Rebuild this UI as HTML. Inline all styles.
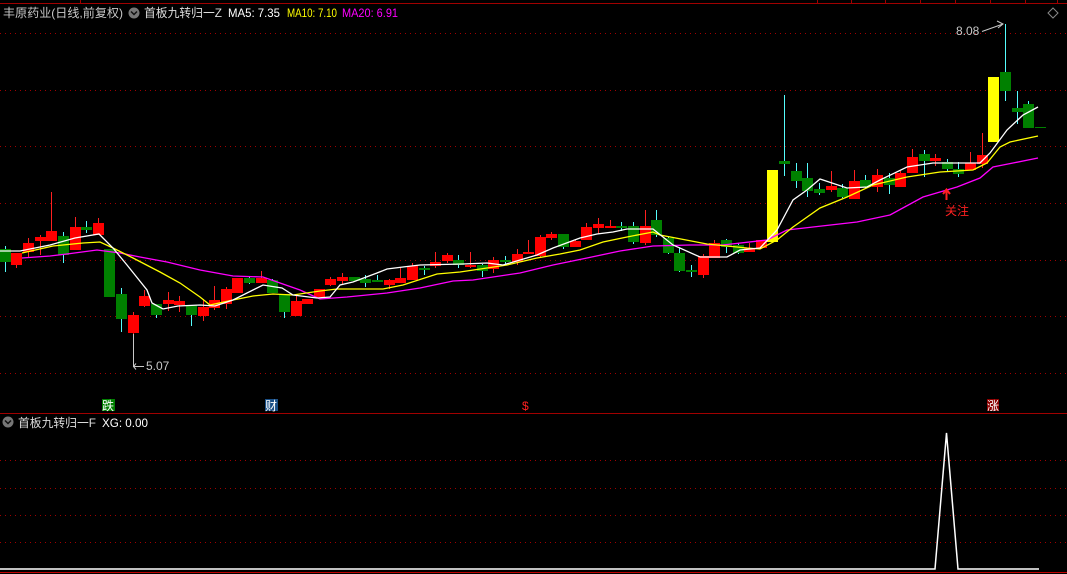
<!DOCTYPE html>
<html><head><meta charset="utf-8"><style>
html,body{margin:0;padding:0;background:#000;width:1067px;height:574px;overflow:hidden}
svg{display:block}
text{font-family:"Liberation Sans","Noto Sans CJK SC",sans-serif;font-size:12px}
</style></head><body>
<svg width="1067" height="574" viewBox="0 0 1067 574" xmlns="http://www.w3.org/2000/svg">
<rect width="1067" height="574" fill="#000"/>
<line x1="0" y1="3.5" x2="1067" y2="3.5" stroke="#a00000"/>
<g stroke="#a00000"><line x1="80.5" y1="0" x2="80.5" y2="3"/><line x1="817.5" y1="0" x2="817.5" y2="3"/><line x1="851.5" y1="0" x2="851.5" y2="3"/><line x1="885.5" y1="0" x2="885.5" y2="3"/><line x1="920.5" y1="0" x2="920.5" y2="3"/><line x1="955.5" y1="0" x2="955.5" y2="3"/><line x1="990.5" y1="0" x2="990.5" y2="3"/><line x1="1025.5" y1="0" x2="1025.5" y2="3"/><line x1="1057.5" y1="0" x2="1057.5" y2="3"/></g>
<g stroke="#a00000" stroke-dasharray="1,4">
<line x1="0" y1="33.5" x2="1067" y2="33.5"/><line x1="0" y1="90.5" x2="1067" y2="90.5"/><line x1="0" y1="146.5" x2="1067" y2="146.5"/><line x1="0" y1="203.5" x2="1067" y2="203.5"/><line x1="0" y1="260.5" x2="1067" y2="260.5"/><line x1="0" y1="316.5" x2="1067" y2="316.5"/><line x1="0" y1="373.5" x2="1067" y2="373.5"/>
<line x1="0" y1="460.5" x2="1067" y2="460.5"/><line x1="0" y1="488.5" x2="1067" y2="488.5"/><line x1="0" y1="515.5" x2="1067" y2="515.5"/><line x1="0" y1="542.5" x2="1067" y2="542.5"/>
</g>
<text x="3" y="17" fill="#c8c8c8" textLength="120" lengthAdjust="spacingAndGlyphs">丰原药业(日线,前复权)</text>
<circle cx="134" cy="13" r="5.5" fill="#777"/><path d="M131 11.5 L134 14.5 L137 11.5" stroke="#111" stroke-width="1.5" fill="none"/>
<text x="144" y="17" fill="#ddd" textLength="78" lengthAdjust="spacingAndGlyphs">首板九转归一Z</text>
<text x="228" y="17" fill="#fff" textLength="52" lengthAdjust="spacingAndGlyphs">MA5: 7.35</text>
<text x="287" y="17" fill="#ffff00" textLength="50" lengthAdjust="spacingAndGlyphs">MA10: 7.10</text>
<text x="342" y="17" fill="#ff00ff" textLength="56" lengthAdjust="spacingAndGlyphs">MA20: 6.91</text>
<path d="M1053 8 L1058 13 L1053 18 L1048 13 Z" stroke="#888" fill="none"/>
<g stroke-width="1">
<g stroke="#54fcfc">
<line x1="5.5" y1="246" x2="5.5" y2="272"/><line x1="63.5" y1="232" x2="63.5" y2="263"/><line x1="86.5" y1="221" x2="86.5" y2="233"/><line x1="121.5" y1="288" x2="121.5" y2="332"/><line x1="156.5" y1="304" x2="156.5" y2="318"/><line x1="191.5" y1="305" x2="191.5" y2="326"/><line x1="249.5" y1="277" x2="249.5" y2="284"/><line x1="272.5" y1="279" x2="272.5" y2="293"/><line x1="284.5" y1="294" x2="284.5" y2="318"/><line x1="365.5" y1="275" x2="365.5" y2="287"/><line x1="377.5" y1="275" x2="377.5" y2="282"/><line x1="424.5" y1="266" x2="424.5" y2="275"/><line x1="458.5" y1="255" x2="458.5" y2="268"/><line x1="482.5" y1="264" x2="482.5" y2="277"/><line x1="505.5" y1="256" x2="505.5" y2="265"/><line x1="563.5" y1="234" x2="563.5" y2="249"/><line x1="621.5" y1="222" x2="621.5" y2="231"/><line x1="633.5" y1="222" x2="633.5" y2="244"/><line x1="656.5" y1="210" x2="656.5" y2="237"/><line x1="668.5" y1="236" x2="668.5" y2="254"/><line x1="679.5" y1="248" x2="679.5" y2="272"/><line x1="691.5" y1="265" x2="691.5" y2="277"/><line x1="726.5" y1="239" x2="726.5" y2="253"/><line x1="738.5" y1="243" x2="738.5" y2="254"/><line x1="784.5" y1="95" x2="784.5" y2="176"/><line x1="796.5" y1="163" x2="796.5" y2="188"/><line x1="807.5" y1="163" x2="807.5" y2="197"/><line x1="819.5" y1="183" x2="819.5" y2="195"/><line x1="842.5" y1="184" x2="842.5" y2="198"/><line x1="865.5" y1="175" x2="865.5" y2="188"/><line x1="889.5" y1="173" x2="889.5" y2="194"/><line x1="924.5" y1="150" x2="924.5" y2="177"/><line x1="947.5" y1="159" x2="947.5" y2="171"/><line x1="958.5" y1="162" x2="958.5" y2="177"/><line x1="1005.5" y1="24" x2="1005.5" y2="101"/><line x1="1017.5" y1="91" x2="1017.5" y2="124"/><line x1="1028.5" y1="101" x2="1028.5" y2="128"/>
</g>
<g stroke="#ff2020">
<line x1="16.5" y1="253" x2="16.5" y2="268"/><line x1="28.5" y1="238" x2="28.5" y2="258"/><line x1="40.5" y1="235" x2="40.5" y2="255"/><line x1="51.5" y1="192" x2="51.5" y2="240"/><line x1="75.5" y1="217" x2="75.5" y2="250"/><line x1="98.5" y1="218" x2="98.5" y2="235"/><line x1="133.5" y1="312" x2="133.5" y2="340"/><line x1="144.5" y1="290" x2="144.5" y2="307"/><line x1="168.5" y1="292" x2="168.5" y2="311"/><line x1="179.5" y1="296" x2="179.5" y2="312"/><line x1="203.5" y1="299" x2="203.5" y2="321"/><line x1="214.5" y1="286" x2="214.5" y2="310"/><line x1="226.5" y1="287" x2="226.5" y2="309"/><line x1="261.5" y1="271" x2="261.5" y2="283"/><line x1="296.5" y1="296" x2="296.5" y2="316"/><line x1="330.5" y1="277" x2="330.5" y2="286"/><line x1="342.5" y1="273" x2="342.5" y2="285"/><line x1="389.5" y1="279" x2="389.5" y2="289"/><line x1="400.5" y1="268" x2="400.5" y2="283"/><line x1="412.5" y1="263" x2="412.5" y2="280"/><line x1="435.5" y1="252" x2="435.5" y2="268"/><line x1="447.5" y1="253" x2="447.5" y2="263"/><line x1="470.5" y1="252" x2="470.5" y2="268"/><line x1="493.5" y1="257" x2="493.5" y2="273"/><line x1="517.5" y1="249" x2="517.5" y2="265"/><line x1="528.5" y1="240" x2="528.5" y2="253"/><line x1="540.5" y1="235" x2="540.5" y2="257"/><line x1="551.5" y1="232" x2="551.5" y2="240"/><line x1="575.5" y1="239" x2="575.5" y2="247"/><line x1="586.5" y1="223" x2="586.5" y2="240"/><line x1="598.5" y1="218" x2="598.5" y2="234"/><line x1="610.5" y1="220" x2="610.5" y2="228"/><line x1="645.5" y1="210" x2="645.5" y2="245"/><line x1="703.5" y1="254" x2="703.5" y2="278"/><line x1="714.5" y1="240" x2="714.5" y2="258"/><line x1="749.5" y1="243" x2="749.5" y2="252"/><line x1="831.5" y1="171" x2="831.5" y2="192"/><line x1="854.5" y1="170" x2="854.5" y2="199"/><line x1="877.5" y1="169" x2="877.5" y2="192"/><line x1="900.5" y1="171" x2="900.5" y2="187"/><line x1="912.5" y1="149" x2="912.5" y2="173"/><line x1="935.5" y1="154" x2="935.5" y2="166"/><line x1="970.5" y1="152" x2="970.5" y2="170"/><line x1="982.5" y1="133" x2="982.5" y2="168"/>
</g>
</g>
<g fill="#008000">
<rect x="0" y="249" width="11" height="13"/><rect x="58" y="236" width="11" height="19"/><rect x="81" y="227" width="11" height="3"/><rect x="104" y="249" width="11" height="48"/><rect x="116" y="294" width="11" height="25"/><rect x="151" y="304" width="11" height="11"/><rect x="186" y="305" width="11" height="10"/><rect x="244" y="278" width="11" height="5"/><rect x="267" y="280" width="11" height="13"/><rect x="279" y="294" width="11" height="18"/><rect x="349" y="277" width="11" height="4"/><rect x="360" y="279" width="11" height="4"/><rect x="372" y="280" width="11" height="2"/><rect x="419" y="268" width="11" height="2"/><rect x="453" y="260" width="11" height="5"/><rect x="477" y="265" width="11" height="6"/><rect x="500" y="260" width="11" height="2"/><rect x="558" y="234" width="11" height="13"/><rect x="616" y="226" width="11" height="2"/><rect x="628" y="226" width="11" height="16"/><rect x="651" y="220" width="11" height="15"/><rect x="663" y="238" width="11" height="15"/><rect x="674" y="253" width="11" height="18"/><rect x="686" y="270" width="11" height="2"/><rect x="721" y="240" width="11" height="7"/><rect x="733" y="245" width="11" height="8"/><rect x="779" y="161" width="11" height="3"/><rect x="791" y="171" width="11" height="10"/><rect x="802" y="178" width="11" height="13"/><rect x="814" y="189" width="11" height="4"/><rect x="837" y="188" width="11" height="9"/><rect x="860" y="180" width="11" height="7"/><rect x="884" y="178" width="11" height="7"/><rect x="919" y="154" width="11" height="7"/><rect x="942" y="162" width="11" height="7"/><rect x="953" y="169" width="11" height="5"/><rect x="1000" y="72" width="11" height="19"/><rect x="1012" y="108" width="11" height="4"/><rect x="1023" y="104" width="11" height="24"/><rect x="1035" y="127" width="11" height="1"/>
</g>
<g fill="#ff0000">
<rect x="11" y="253" width="11" height="12"/><rect x="23" y="243" width="11" height="9"/><rect x="35" y="237" width="11" height="4"/><rect x="46" y="231" width="11" height="10"/><rect x="70" y="227" width="11" height="23"/><rect x="93" y="223" width="11" height="12"/><rect x="128" y="315" width="11" height="18"/><rect x="139" y="296" width="11" height="10"/><rect x="163" y="300" width="11" height="4"/><rect x="174" y="301" width="11" height="4"/><rect x="198" y="307" width="11" height="9"/><rect x="209" y="300" width="11" height="8"/><rect x="221" y="289" width="11" height="15"/><rect x="232" y="278" width="11" height="15"/><rect x="256" y="278" width="11" height="5"/><rect x="291" y="301" width="11" height="15"/><rect x="302" y="299" width="11" height="5"/><rect x="314" y="289" width="11" height="8"/><rect x="325" y="279" width="11" height="6"/><rect x="337" y="277" width="11" height="4"/><rect x="384" y="280" width="11" height="5"/><rect x="395" y="278" width="11" height="5"/><rect x="407" y="266" width="11" height="14"/><rect x="430" y="262" width="11" height="4"/><rect x="442" y="255" width="11" height="6"/><rect x="465" y="265" width="11" height="2"/><rect x="488" y="260" width="11" height="9"/><rect x="512" y="254" width="11" height="8"/><rect x="523" y="252" width="11" height="2"/><rect x="535" y="237" width="11" height="19"/><rect x="546" y="234" width="11" height="4"/><rect x="570" y="241" width="11" height="6"/><rect x="581" y="227" width="11" height="13"/><rect x="593" y="224" width="11" height="4"/><rect x="605" y="226" width="11" height="2"/><rect x="640" y="226" width="11" height="17"/><rect x="698" y="256" width="11" height="19"/><rect x="709" y="243" width="11" height="15"/><rect x="744" y="248" width="11" height="4"/><rect x="756" y="240" width="11" height="8"/><rect x="826" y="186" width="11" height="4"/><rect x="849" y="181" width="11" height="18"/><rect x="872" y="175" width="11" height="12"/><rect x="895" y="173" width="11" height="14"/><rect x="907" y="157" width="11" height="16"/><rect x="930" y="158" width="11" height="3"/><rect x="965" y="163" width="11" height="7"/><rect x="977" y="155" width="11" height="9"/>
</g>
<g fill="#ffff00"><rect x="767" y="170" width="11" height="72"/><rect x="988" y="77" width="11" height="65"/></g>
<polyline fill="none" stroke="#ff00ff" stroke-width="1.3" points="22,258 50,256 67,254 97,250 120,253 140,257 167,262 200,270 233,276 263,277 300,290 320,299 347,297 387,293 420,288 453,281 473,280 493,277 520,273 553,265 587,258 620,251 653,246 690,245 723,245 767,240 787,230 813,227 857,222 890,215 923,197 957,187 980,178 993,167 1013,163 1038,158"/>
<polyline fill="none" stroke="#ffff00" stroke-width="1.3" points="22,253 53,246 83,243 100,242 113,248 133,258 160,272 180,283 200,297 210,305 233,300 253,296 273,294 293,295 320,291 337,289 383,289 403,285 437,274 460,272 487,268 507,265 537,258 560,254 580,250 603,242 627,237 653,232 660,235 707,244 747,248 760,249 777,240 793,227 820,208 847,197 873,185 907,177 940,172 973,170 987,163 1000,147 1010,142 1038,136"/>
<polyline fill="none" stroke="#ffffff" stroke-width="1.3" points="0,251 20,251 50,245 75,238 99,234 113,248 127,265 147,290 152,303 163,309 178,306 200,305 215,306 233,300 263,285 282,288 293,295 317,298 330,297 340,285 353,282 377,273 387,269 403,267 420,265 463,264 487,263 503,265 520,260 537,255 553,248 580,238 597,234 613,232 627,229 653,229 673,245 700,257 727,257 740,250 760,248 777,230 793,200 807,190 820,179 832,183 847,188 867,187 880,180 907,167 933,163 980,163 990,153 1007,130 1023,115 1038,107"/>
<g stroke="#c8c8c8" fill="none"><path d="M133.5 334 V366.5 H144"/><path d="M136 363.5 L133.5 366.5 L136 369.5"/><path d="M982 31.5 L1003 24"/><path d="M997 21 L1003 24 L998 28"/></g>
<text x="146" y="370" fill="#c8c8c8">5.07</text>
<text x="956" y="35" fill="#c8c8c8">8.08</text>
<path d="M946.5 200 V191 M943 194 L946.5 189.5 L950 194" stroke="#ff2020" stroke-width="2" fill="none"/>
<text x="945" y="215" fill="#ff2020">关注</text>
<rect x="102" y="399" width="13" height="12" fill="#008000"/><text x="102" y="410" fill="#fff">跌</text>
<rect x="265" y="399" width="13" height="12" fill="#1a4f86"/><text x="265" y="410" fill="#fff">财</text>
<text x="522" y="410" fill="#ff2020">$</text>
<rect x="987" y="399" width="12" height="12" fill="#8b0000"/><text x="987" y="410" fill="#fff">涨</text>
<line x1="0" y1="413.5" x2="1067" y2="413.5" stroke="#a00000"/>
<circle cx="8" cy="422" r="5.5" fill="#777"/><path d="M5 420.5 L8 423.5 L11 420.5" stroke="#111" stroke-width="1.5" fill="none"/>
<text x="18" y="427" fill="#ddd" textLength="78" lengthAdjust="spacingAndGlyphs">首板九转归一F</text>
<text x="102" y="427" fill="#fff" textLength="46" lengthAdjust="spacingAndGlyphs">XG: 0.00</text>
<polyline fill="none" stroke="#fff" stroke-width="1.5" points="0,569 935,569 946.5,433 958,569 1039,569"/>
<line x1="0" y1="572.5" x2="1067" y2="572.5" stroke="#c00000"/>
</svg>
</body></html>
